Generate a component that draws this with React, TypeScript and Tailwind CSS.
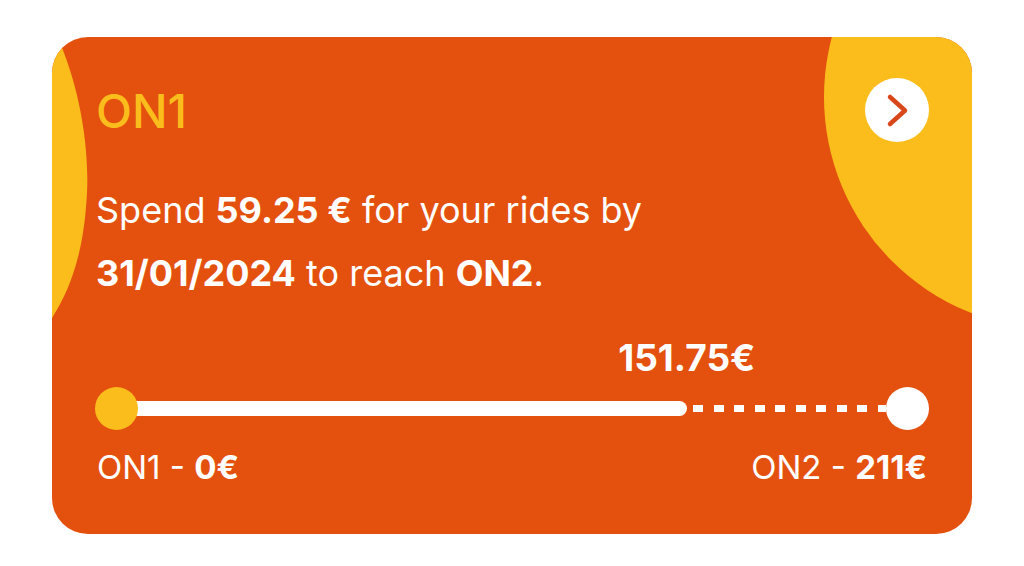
const level = {
  current: 'ON1',
  next: 'ON2',
  spent: 151.75,
  target: 211,
  remaining: '59.25 €',
  deadline: '31/01/2024',
};

// distance between the two end dots' centres
const TRACK = 793;
const DOT = 43;

const Blobs = () => (
  <svg
    className="absolute left-0 top-0 pointer-events-none"
    width="920"
    height="497"
    viewBox="0 0 920 497"
  >
    <path d="M0 -5 L3 -5 C25 40 40 110 34 170 C30 222 16 256 0 281 Z" fill="#FABD1C" />
    <circle cx="1004" cy="60" r="232" fill="#FABD1C" />
  </svg>
);

const Progress = () => {
  const pct = level.spent / level.target;
  const doneX = pct * TRACK;
  return (
    <div className="flex flex-col">
      <div style={{ paddingLeft: DOT / 2 + doneX }} className="flex">
        <div className="w-0 flex justify-center">
          <span className="whitespace-nowrap text-[37px] leading-[37px] font-bold text-white">
            {level.spent.toFixed(2)}€
          </span>
        </div>
      </div>
      <div className="flex items-center mt-[11px] h-[43px]">
        <div className="w-[43px] h-[43px] rounded-full bg-[#FABD1C] shrink-0 relative z-10" />
        <div
          style={{ width: doneX - DOT / 2 + 3 }}
          className="h-[15px] bg-white rounded-r-full -ml-[3px] shrink-0"
        />
        <div className="flex-1 h-[7px] ml-[6px] bg-[repeating-linear-gradient(90deg,#ffffff_0_10px,transparent_10px_20.5px)]" />
        <div className="w-[43px] h-[43px] rounded-full bg-white shrink-0" />
      </div>
      <div className="flex justify-between mt-[21px] text-[33px] leading-[33px] text-white px-[2px]">
        <span>
          {level.current} - <span className="font-bold">0€</span>
        </span>
        <span>
          {level.next} - <span className="font-bold">{level.target}€</span>
        </span>
      </div>
    </div>
  );
};

export default function App() {
  return (
    <div className="min-h-screen bg-white pt-[37px] font-['Inter',sans-serif]">
      <div className="relative mx-auto w-[920px] h-[497px] rounded-[36px] overflow-hidden bg-[#E4510F]">
        <Blobs />
        <div className="relative flex flex-col px-[43px] pt-[41px]">
          <div className="flex justify-between items-start">
            <h2 className="mt-[9px] ml-[1px] text-[47px] leading-[47px] font-medium text-[#FABD1C]">
              {level.current}
            </h2>
            <button className="w-[64px] h-[64px] rounded-full bg-white flex items-center justify-center">
              <svg width="64" height="64" viewBox="0 0 64 64" fill="none">
                <path
                  d="M25 19 L40 32.5 L25 46"
                  stroke="#D9481A"
                  strokeWidth="4.5"
                  strokeLinecap="round"
                  strokeLinejoin="round"
                />
              </svg>
            </button>
          </div>
          <p className="mt-[37px] ml-[1px] text-[36px] leading-[63px] text-white">
            Spend <span className="font-bold">{level.remaining}</span> for your rides by
            <br />
            <span className="font-bold">{level.deadline}</span> to reach{' '}
            <span className="font-bold">{level.next}</span>.
          </p>
          <div className="mt-[34px]">
            <Progress />
          </div>
        </div>
      </div>
    </div>
  );
}
